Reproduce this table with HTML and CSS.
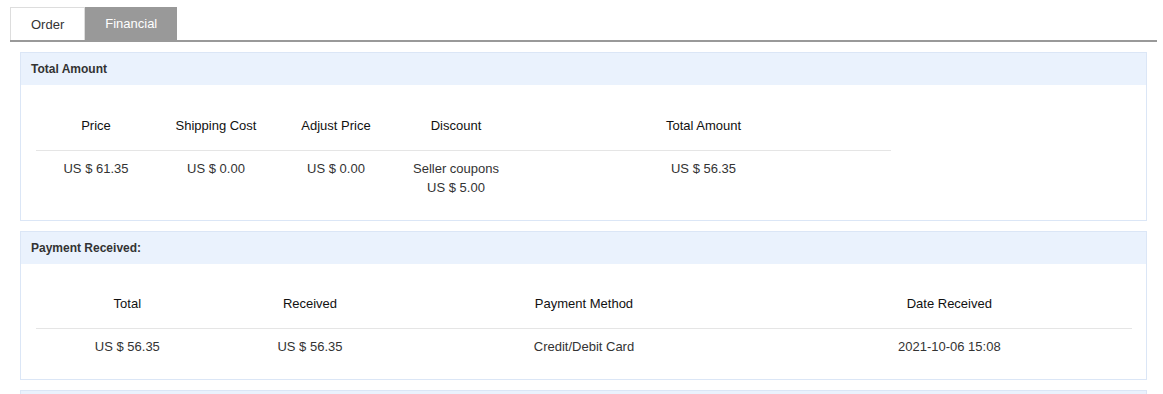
FILE: index.html
```html
<!DOCTYPE html>
<html>
<head>
<meta charset="utf-8">
<link rel="stylesheet" href="styles.css">
</head>
<body>
<div class="page">
  <div class="tabs">
    <div class="tab">Order</div>
    <div class="tab active">Financial</div>
  </div>
  <div class="panel">
    <div class="panel-head">Total Amount</div>
    <div class="panel-body">
      <table class="grid grid-amount">
        <colgroup><col class="c120"><col class="c120"><col class="c120"><col class="c120"><col></colgroup>
        <thead>
          <tr><th>Price</th><th>Shipping Cost</th><th>Adjust Price</th><th>Discount</th><th>Total Amount</th></tr>
        </thead>
        <tbody>
          <tr><td>US $ 61.35</td><td>US $ 0.00</td><td>US $ 0.00</td><td>Seller coupons<br>US $ 5.00</td><td>US $ 56.35</td></tr>
        </tbody>
      </table>
    </div>
  </div>
  <div class="panel">
    <div class="panel-head">Payment Received:</div>
    <div class="panel-body">
      <table class="grid grid-payment">
        <colgroup><col class="c-sm"><col class="c-sm"><col class="c-lg"><col class="c-lg"></colgroup>
        <thead>
          <tr><th>Total</th><th>Received</th><th>Payment Method</th><th>Date Received</th></tr>
        </thead>
        <tbody>
          <tr><td>US $ 56.35</td><td>US $ 56.35</td><td>Credit/Debit Card</td><td>2021-10-06 15:08</td></tr>
        </tbody>
      </table>
    </div>
  </div>
  <div class="panel">
    <div class="panel-head">&nbsp;</div>
  </div>
</div>
</body>
</html>
```
FILE: styles.css
```css
html, body {
  margin: 0;
  padding: 0;
  background: #fff;
}
body {
  font-family: "Liberation Sans", Arial, sans-serif;
  font-size: 13px;
  color: #222;
  overflow: hidden;
}
.page {
  width: 1147px;
  margin-left: 10px;
  padding-top: 7px;
}
.tabs {
  display: flex;
  border-bottom: 2px solid #999;
  margin-bottom: 10px;
}
.tab {
  height: 33px;
  box-sizing: border-box;
  padding: 0 20px;
  display: flex;
  align-items: center;
  border: 1px solid #ddd;
  border-bottom: none;
  color: #333;
  background: #fff;
}
.tab.active {
  background: #999;
  border: none;
  color: #fff;
}
.panel {
  margin: 0 10px 10px;
  border: 1px solid #dbe6f6;
  background: #fff;
}
.panel-head {
  height: 32px;
  box-sizing: border-box;
  padding: 0 10px;
  display: flex;
  align-items: center;
  background: #eaf2fd;
  font-size: 12px;
  font-weight: bold;
  color: #333;
}
.panel-body {
  padding: 15px;
}
.grid {
  border-collapse: collapse;
  table-layout: fixed;
}
.grid-amount {
  width: 855px;
}
.grid-payment {
  width: 1096px;
}
.c120 { width: 120px; }
.c-sm { width: 16.666%; }
.c-lg { width: 33.333%; }
.grid th {
  height: 50px;
  padding: 0;
  font-weight: normal;
  text-align: center;
  vertical-align: middle;
  color: #111;
  border-bottom: 1px solid #e5e5e5;
}
.grid-payment th {
  height: 49px;
}
.grid td {
  padding: 8px 0;
  line-height: 19px;
  text-align: center;
  vertical-align: top;
  color: #333;
}
```
